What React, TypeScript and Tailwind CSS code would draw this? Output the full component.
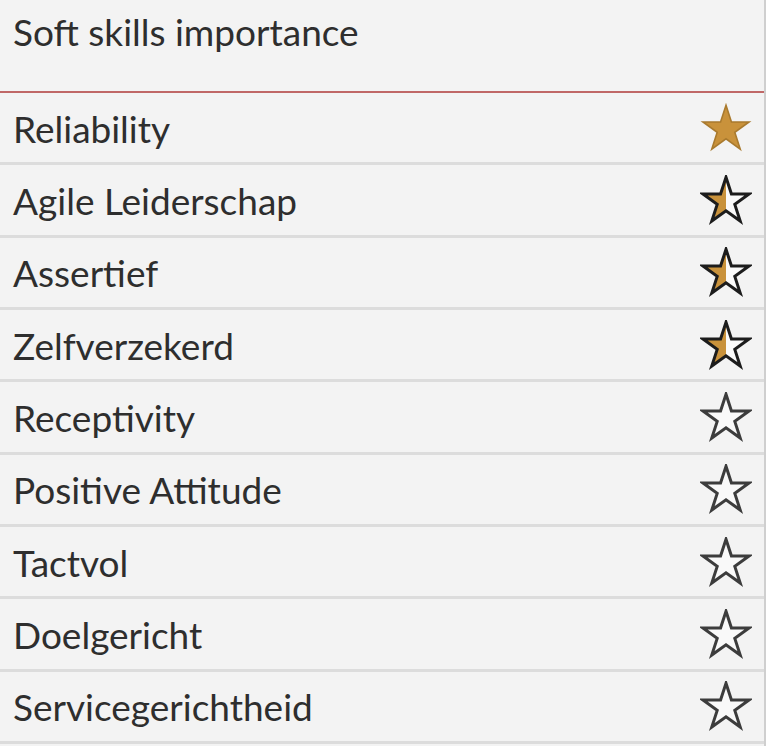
import React from "react";

type Kind = "full" | "half" | "empty";

const rows: { label: string; kind: Kind }[] = [
  { label: "Reliability", kind: "full" },
  { label: "Agile Leiderschap", kind: "half" },
  { label: "Assertief", kind: "half" },
  { label: "Zelfverzekerd", kind: "half" },
  { label: "Receptivity", kind: "empty" },
  { label: "Positive Attitude", kind: "empty" },
  { label: "Tactvol", kind: "empty" },
  { label: "Doelgericht", kind: "empty" },
  { label: "Servicegerichtheid", kind: "empty" },
];

function starPoints(cx: number, cy: number, R: number) {
  const r = R * 0.382;
  const pts: string[] = [];
  for (let i = 0; i < 10; i++) {
    const rad = i % 2 === 0 ? R : r;
    const a = (-90 + i * 36) * (Math.PI / 180);
    pts.push(`${(cx + rad * Math.cos(a)).toFixed(2)},${(cy + rad * Math.sin(a)).toFixed(2)}`);
  }
  return pts.join(" ");
}

function Star({ kind, id }: { kind: Kind; id: string }) {
  const pts = starPoints(26, 26.5, 24.2);
  let fill = "#f9f9f9";
  let stroke = "#3c3c3c";
  if (kind === "full") {
    fill = "#c9923b";
    stroke = "#a97a2e";
  } else if (kind === "half") {
    fill = `url(#${id})`;
    stroke = "#1c1c1c";
  }
  return (
    <svg width="52" height="50" viewBox="0 0 52 50">
      {kind === "half" && (
        <defs>
          <linearGradient id={id} x1="0" y1="0" x2="1" y2="0">
            <stop offset="0.5" stopColor="#c9923b" />
            <stop offset="0.5" stopColor="#fafafa" />
          </linearGradient>
        </defs>
      )}
      <polygon
        points={pts}
        fill={fill}
        stroke={stroke}
        strokeWidth={kind === "full" ? 1.6 : 3}
        strokeLinejoin="miter"
      />
    </svg>
  );
}

export default function App() {
  return (
    <div className="w-[768px] h-[746px] bg-white overflow-hidden">
      <div
        className="w-[766px] h-[746px] bg-[#f3f3f3] border-r-2 border-[#cfcfcf] text-[#2e2e2e] flex flex-col"
        style={{ fontFamily: "Lato, 'Open Sans', sans-serif" }}
      >
        <div className="h-[93px] shrink-0 border-b-2 border-[#c06867] pl-[13px] pt-[12px] text-[37px] leading-[40px]">
          Soft skills importance
        </div>
        {rows.map((r, i) => (
          <div
            key={r.label}
            className="h-[72.33px] shrink-0 border-b-[3px] border-[#dcdcdc] flex items-center justify-between pl-[13px] pr-[12px] text-[37px]"
          >
            <span className="leading-none pt-[1px]">{r.label}</span>
            <Star kind={r.kind} id={`half-${i}`} />
          </div>
        ))}
      </div>
    </div>
  );
}
